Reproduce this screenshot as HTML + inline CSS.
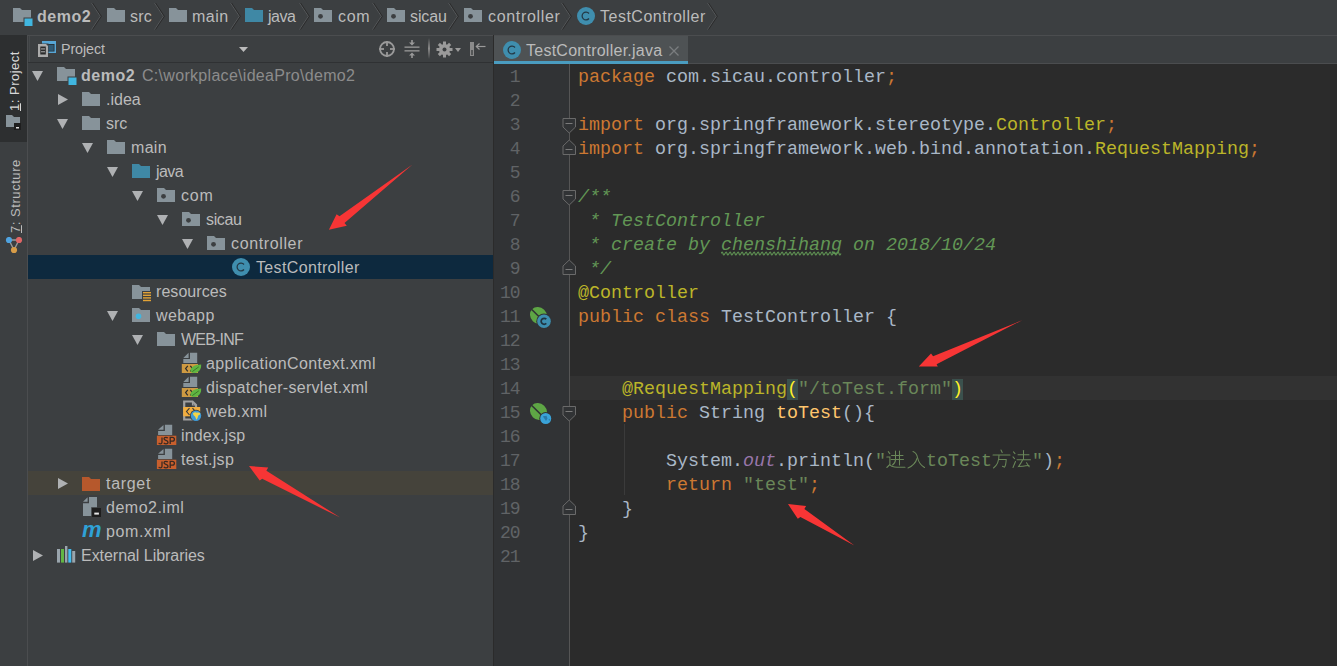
<!DOCTYPE html>
<html><head><meta charset="utf-8"><style>
html,body{margin:0;padding:0;}
body{width:1337px;height:666px;overflow:hidden;background:#3c3f41;position:relative;font-family:"Liberation Sans",sans-serif;}
.abs{position:absolute;}
.ui{font-family:"Liberation Sans",sans-serif;font-size:16px;line-height:24px;color:#bbbbbb;white-space:nowrap;letter-spacing:0.3px;}
.code{font-family:"Liberation Mono",monospace;font-size:18.33px;line-height:24px;white-space:pre;color:#a9b7c6;padding-top:2px;}
.gnum{font-family:"Liberation Mono",monospace;font-size:18px;line-height:24px;color:#606366;text-align:right;padding-top:1px;letter-spacing:-1px;}
.cjk{display:inline-block;width:20px;height:1px;position:relative;vertical-align:baseline;}
.cjk svg{position:absolute;left:0;top:-16px;}
</style></head>
<body>
<div class="abs" id="bc" style="left:0;top:0;width:1337px;height:35px;background:#3c3f41"></div><svg class="abs" style="left:13px;top:8px" width="20" height="18" viewBox="0 0 20 18"><path d="M0 0H7L9 2H18V14H0Z" fill="#87939a"/><rect x="10.5" y="9.5" width="8" height="8" fill="#3c3f41"/><rect x="11.5" y="10.5" width="8" height="8" fill="#40b6e0"/></svg><div class="abs ui" style="left:37px;top:5px;letter-spacing:0.5px;font-weight:bold;">demo2</div><svg class="abs" style="left:107px;top:8px" width="18" height="14" viewBox="0 0 18 14"><path d="M0 0H7L9 2H18V14H0Z" fill="#87939a"/></svg><div class="abs ui" style="left:130px;top:5px;letter-spacing:0.2px;">src</div><svg class="abs" style="left:169px;top:8px" width="18" height="14" viewBox="0 0 18 14"><path d="M0 0H7L9 2H18V14H0Z" fill="#87939a"/></svg><div class="abs ui" style="left:192px;top:5px;letter-spacing:0.5px;">main</div><svg class="abs" style="left:245px;top:8px" width="18" height="14" viewBox="0 0 18 14"><path d="M0 0H7L9 2H18V14H0Z" fill="#3f88a5"/></svg><div class="abs ui" style="left:268px;top:5px;letter-spacing:-0.5px;">java</div><svg class="abs" style="left:314px;top:8px" width="18" height="14" viewBox="0 0 18 14"><path d="M0 0H7L9 2H18V14H0Z" fill="#87939a"/><circle cx="6.5" cy="8.3" r="2.4" fill="#3c3f41"/></svg><div class="abs ui" style="left:338px;top:5px;letter-spacing:0.65px;">com</div><svg class="abs" style="left:387px;top:8px" width="18" height="14" viewBox="0 0 18 14"><path d="M0 0H7L9 2H18V14H0Z" fill="#87939a"/><circle cx="6.5" cy="8.3" r="2.4" fill="#3c3f41"/></svg><div class="abs ui" style="left:410px;top:5px;letter-spacing:-0.1px;">sicau</div><svg class="abs" style="left:464px;top:8px" width="18" height="14" viewBox="0 0 18 14"><path d="M0 0H7L9 2H18V14H0Z" fill="#87939a"/><circle cx="6.5" cy="8.3" r="2.4" fill="#3c3f41"/></svg><div class="abs ui" style="left:488px;top:5px;letter-spacing:0.67px;">controller</div><svg class="abs" style="left:577px;top:7px" width="18" height="18" viewBox="0 0 18 18"><circle cx="9" cy="9" r="9" fill="#3f8eae"/><path d="M12 6.5A3.9 3.9 0 1 0 12 11.5" fill="none" stroke="#233845" stroke-width="1.25"/></svg><div class="abs ui" style="left:600px;top:5px;letter-spacing:0.5px;">TestController</div><svg class="abs" style="left:90px;top:0px" width="14" height="34" viewBox="0 0 14 34"><path d="M1.6 3L10.4 16.3L1.6 29.5" fill="none" stroke="#55585a" stroke-width="1"/><path d="M2.6 3L11.4 16.3L2.6 29.5" fill="none" stroke="#2b2b2b" stroke-width="1"/></svg><svg class="abs" style="left:153px;top:0px" width="14" height="34" viewBox="0 0 14 34"><path d="M1.6 3L10.4 16.3L1.6 29.5" fill="none" stroke="#55585a" stroke-width="1"/><path d="M2.6 3L11.4 16.3L2.6 29.5" fill="none" stroke="#2b2b2b" stroke-width="1"/></svg><svg class="abs" style="left:229px;top:0px" width="14" height="34" viewBox="0 0 14 34"><path d="M1.6 3L10.4 16.3L1.6 29.5" fill="none" stroke="#55585a" stroke-width="1"/><path d="M2.6 3L11.4 16.3L2.6 29.5" fill="none" stroke="#2b2b2b" stroke-width="1"/></svg><svg class="abs" style="left:298px;top:0px" width="14" height="34" viewBox="0 0 14 34"><path d="M1.6 3L10.4 16.3L1.6 29.5" fill="none" stroke="#55585a" stroke-width="1"/><path d="M2.6 3L11.4 16.3L2.6 29.5" fill="none" stroke="#2b2b2b" stroke-width="1"/></svg><svg class="abs" style="left:371px;top:0px" width="14" height="34" viewBox="0 0 14 34"><path d="M1.6 3L10.4 16.3L1.6 29.5" fill="none" stroke="#55585a" stroke-width="1"/><path d="M2.6 3L11.4 16.3L2.6 29.5" fill="none" stroke="#2b2b2b" stroke-width="1"/></svg><svg class="abs" style="left:447px;top:0px" width="14" height="34" viewBox="0 0 14 34"><path d="M1.6 3L10.4 16.3L1.6 29.5" fill="none" stroke="#55585a" stroke-width="1"/><path d="M2.6 3L11.4 16.3L2.6 29.5" fill="none" stroke="#2b2b2b" stroke-width="1"/></svg><svg class="abs" style="left:560px;top:0px" width="14" height="34" viewBox="0 0 14 34"><path d="M1.6 3L10.4 16.3L1.6 29.5" fill="none" stroke="#55585a" stroke-width="1"/><path d="M2.6 3L11.4 16.3L2.6 29.5" fill="none" stroke="#2b2b2b" stroke-width="1"/></svg><svg class="abs" style="left:706px;top:0px" width="14" height="34" viewBox="0 0 14 34"><path d="M1.6 3L10.4 16.3L1.6 29.5" fill="none" stroke="#55585a" stroke-width="1"/><path d="M2.6 3L11.4 16.3L2.6 29.5" fill="none" stroke="#2b2b2b" stroke-width="1"/></svg><div class="abs" style="left:0;top:35px;width:27px;height:631px;background:#3c3f41"></div><div class="abs" style="left:0;top:35px;width:27px;height:107px;background:#2d2f30"></div><div class="abs" style="left:27px;top:35px;width:1px;height:631px;background:#4b4d4f"></div><div class="abs vt" style="left:2px;top:50px;width:24px;height:60px;"><span style="display:block;transform:rotate(-90deg);transform-origin:0 0;position:absolute;left:6px;top:61px;white-space:nowrap;font-size:13px;color:#d8d8d8;line-height:14px;letter-spacing:0.5px"><u>1</u>: Project</span></div><svg class="abs" style="left:6px;top:115px" width="16" height="16" viewBox="0 0 16 16"><path d="M0 0H6L8 2H14V12H0Z" fill="#87939a"/><rect x="8" y="8" width="7" height="7" fill="#1e1e1e"/><rect x="10" y="12" width="3" height="1.5" fill="#ddd"/></svg><div class="abs vt" style="left:2px;top:160px;width:24px;height:73px;"><span style="display:block;transform:rotate(-90deg);transform-origin:0 0;position:absolute;left:7px;top:73px;white-space:nowrap;font-size:13px;color:#bbbbbb;line-height:14px;letter-spacing:0.55px"><u>7</u>: Structure</span></div><svg class="abs" style="left:5px;top:237px" width="18" height="17" viewBox="0 0 18 17"><path d="M4 3H14L9 13Z" fill="none" stroke="#9a9a9a" stroke-width="1.4"/><circle cx="4" cy="3" r="3.1" fill="#4fa3e0"/><circle cx="14" cy="3" r="3.1" fill="#e06666"/><circle cx="9" cy="13" r="3.1" fill="#d79c48"/></svg><div class="abs" style="left:28px;top:35px;width:465px;height:631px;background:#3c3f41"></div><div class="abs" style="left:28px;top:35px;width:465px;height:1px;background:#4b4d4f"></div><div class="abs" style="left:28px;top:62px;width:465px;height:1px;background:#2f3133"></div><div class="abs" style="left:29px;top:36px;width:1px;height:26px;background:#45484a"></div><div class="abs" style="left:493px;top:35px;width:1px;height:631px;background:#2b2b2b"></div><svg class="abs" style="left:37px;top:40px" width="21" height="18" viewBox="0 0 21 18"><rect x="5" y="1" width="14" height="12" fill="#56a6d6"/><rect x="9.5" y="4" width="8" height="7.5" fill="#262b2e"/><rect x="10.3" y="4.8" width="6.4" height="6" fill="#2f5a75"/><rect x="0.5" y="3.5" width="11" height="14" fill="#3c3f41"/><path d="M1 4H9L11 6V17H1Z" fill="#ababab"/><rect x="3.3" y="6.5" width="5.5" height="8" fill="#2b2b2b"/><rect x="4" y="8.2" width="4" height="1.4" fill="#8a8a8a"/><rect x="4" y="11" width="4" height="1.4" fill="#8a8a8a"/></svg><div class="abs ui" style="left:61px;top:37px;font-size:14.3px;color:#bbbbbb;letter-spacing:-0.1px">Project</div><svg class="abs" style="left:238.5px;top:47px" width="9" height="5" viewBox="0 0 9 5"><path d="M0 0H9L4.5 5Z" fill="#bbbbbb"/></svg><svg class="abs" style="left:378px;top:40px" width="18" height="18" viewBox="0 0 18 18"><circle cx="9" cy="9" r="7" fill="none" stroke="#9a9a9a" stroke-width="1.8"/><rect x="8.1" y="1" width="1.8" height="5" fill="#9a9a9a"/><rect x="8.1" y="12" width="1.8" height="5" fill="#9a9a9a"/><rect x="1" y="8.1" width="5" height="1.8" fill="#9a9a9a"/><rect x="12" y="8.1" width="5" height="1.8" fill="#9a9a9a"/></svg><svg class="abs" style="left:404px;top:40px" width="16" height="18" viewBox="0 0 16 18"><rect x="0.5" y="6.5" width="15" height="1.3" fill="#9a9a9a"/><rect x="0.5" y="10.2" width="15" height="1.3" fill="#9a9a9a"/><path d="M8 5.5L5 2.5H7.2V0H8.8V2.5H11Z" fill="#9a9a9a"/><path d="M8 12.5L5 15.5H7.2V18H8.8V15.5H11Z" fill="#9a9a9a"/></svg><div class="abs" style="left:428px;top:38px;width:2px;height:21px;background:linear-gradient(#3c3f41,#8a8a8a,#3c3f41)"></div><svg class="abs" style="left:436px;top:41px" width="17" height="17" viewBox="0 0 17 17"><g fill="#9a9a9a"><circle cx="8.5" cy="8.5" r="5.5"/><rect x="7" y="0.5" width="3" height="16"/><rect x="0.5" y="7" width="16" height="3"/><rect x="7" y="0.5" width="3" height="16" transform="rotate(45 8.5 8.5)"/><rect x="7" y="0.5" width="3" height="16" transform="rotate(-45 8.5 8.5)"/></g><circle cx="8.5" cy="8.5" r="2" fill="#3c3f41"/></svg><svg class="abs" style="left:455px;top:48px" width="6" height="4" viewBox="0 0 6 4"><path d="M0 0H6L3 4Z" fill="#9a9a9a"/></svg><svg class="abs" style="left:470px;top:42px" width="17" height="14" viewBox="0 0 17 14"><rect x="0" y="0" width="4" height="14" fill="#8a8a8a"/><rect x="1.3" y="8" width="1.4" height="5" fill="#3c3f41"/><path d="M15.5 4.5H7" stroke="#9a9a9a" stroke-width="1.2"/><path d="M9.5 1.5L6.3 4.5L9.5 7.5" fill="none" stroke="#9a9a9a" stroke-width="1.2"/></svg><div class="abs" style="left:28px;top:255px;width:465px;height:24px;background:#0d293e"></div><div class="abs" style="left:28px;top:471px;width:465px;height:24px;background:#45433b"></div><svg class="abs" style="left:32px;top:71px" width="11" height="10" viewBox="0 0 11 10"><path d="M0 0H11L5.5 10Z" fill="#afb1b3"/></svg><svg class="abs" style="left:57px;top:67px" width="20" height="18" viewBox="0 0 20 18"><path d="M0 0H7L9 2H18V14H0Z" fill="#87939a"/><rect x="10.5" y="9.5" width="8" height="8" fill="#3c3f41"/><rect x="11.5" y="10.5" width="8" height="8" fill="#40b6e0"/></svg><div class="abs ui" style="left:81px;top:64px;letter-spacing:0.5px;font-weight:bold;">demo2</div><div class="abs ui" style="left:142px;top:64px;color:#8c8c8c">C:\workplace\ideaPro\demo2</div><svg class="abs" style="left:58px;top:94px" width="10" height="11" viewBox="0 0 10 11"><path d="M0 0V11L10 5.5Z" fill="#afb1b3"/></svg><svg class="abs" style="left:82px;top:92px" width="18" height="14" viewBox="0 0 18 14"><path d="M0 0H7L9 2H18V14H0Z" fill="#87939a"/></svg><div class="abs ui" style="left:106px;top:88px;letter-spacing:0px;">.idea</div><svg class="abs" style="left:57px;top:119px" width="11" height="10" viewBox="0 0 11 10"><path d="M0 0H11L5.5 10Z" fill="#afb1b3"/></svg><svg class="abs" style="left:82px;top:116px" width="18" height="14" viewBox="0 0 18 14"><path d="M0 0H7L9 2H18V14H0Z" fill="#87939a"/></svg><div class="abs ui" style="left:106px;top:112px;letter-spacing:0px;">src</div><svg class="abs" style="left:82px;top:143px" width="11" height="10" viewBox="0 0 11 10"><path d="M0 0H11L5.5 10Z" fill="#afb1b3"/></svg><svg class="abs" style="left:107px;top:140px" width="18" height="14" viewBox="0 0 18 14"><path d="M0 0H7L9 2H18V14H0Z" fill="#87939a"/></svg><div class="abs ui" style="left:131px;top:136px;letter-spacing:0.3px;">main</div><svg class="abs" style="left:107px;top:167px" width="11" height="10" viewBox="0 0 11 10"><path d="M0 0H11L5.5 10Z" fill="#afb1b3"/></svg><svg class="abs" style="left:132px;top:164px" width="18" height="14" viewBox="0 0 18 14"><path d="M0 0H7L9 2H18V14H0Z" fill="#3f88a5"/></svg><div class="abs ui" style="left:156px;top:160px;letter-spacing:-0.6px;">java</div><svg class="abs" style="left:132px;top:191px" width="11" height="10" viewBox="0 0 11 10"><path d="M0 0H11L5.5 10Z" fill="#afb1b3"/></svg><svg class="abs" style="left:157px;top:188px" width="18" height="14" viewBox="0 0 18 14"><path d="M0 0H7L9 2H18V14H0Z" fill="#87939a"/><circle cx="6.5" cy="8.3" r="2.4" fill="#3c3f41"/></svg><div class="abs ui" style="left:181px;top:184px;letter-spacing:0.8px;">com</div><svg class="abs" style="left:157px;top:215px" width="11" height="10" viewBox="0 0 11 10"><path d="M0 0H11L5.5 10Z" fill="#afb1b3"/></svg><svg class="abs" style="left:182px;top:212px" width="18" height="14" viewBox="0 0 18 14"><path d="M0 0H7L9 2H18V14H0Z" fill="#87939a"/><circle cx="6.5" cy="8.3" r="2.4" fill="#3c3f41"/></svg><div class="abs ui" style="left:206px;top:208px;letter-spacing:-0.35px;">sicau</div><svg class="abs" style="left:182px;top:239px" width="11" height="10" viewBox="0 0 11 10"><path d="M0 0H11L5.5 10Z" fill="#afb1b3"/></svg><svg class="abs" style="left:207px;top:236px" width="18" height="14" viewBox="0 0 18 14"><path d="M0 0H7L9 2H18V14H0Z" fill="#87939a"/><circle cx="6.5" cy="8.3" r="2.4" fill="#3c3f41"/></svg><div class="abs ui" style="left:231px;top:232px;letter-spacing:0.63px;">controller</div><svg class="abs" style="left:232px;top:258px" width="18" height="18" viewBox="0 0 18 18"><circle cx="9" cy="9" r="9" fill="#3f8eae"/><path d="M12 6.5A3.9 3.9 0 1 0 12 11.5" fill="none" stroke="#233845" stroke-width="1.25"/></svg><div class="abs ui" style="left:256px;top:256px;letter-spacing:0.35px;">TestController</div><svg class="abs" style="left:132px;top:285px" width="18" height="14" viewBox="0 0 18 14"><path d="M0 0H7L9 2H18V14H0Z" fill="#87939a"/></svg><svg class="abs" style="left:142px;top:291px" width="10" height="11" viewBox="0 0 10 11"><rect x="0" y="0" width="10" height="11" fill="#3c3f41"/><g fill="#e3a336"><rect x="1" y="1" width="8" height="1.4"/><rect x="1" y="3.6" width="8" height="1.4"/><rect x="1" y="6.2" width="8" height="1.4"/><rect x="1" y="8.8" width="8" height="1.4"/></g></svg><div class="abs ui" style="left:156px;top:280px;letter-spacing:0.05px;">resources</div><svg class="abs" style="left:107px;top:311px" width="11" height="10" viewBox="0 0 11 10"><path d="M0 0H11L5.5 10Z" fill="#afb1b3"/></svg><svg class="abs" style="left:132px;top:308px" width="18" height="14" viewBox="0 0 18 14"><path d="M0 0H7L9 2H18V14H0Z" fill="#87939a"/><circle cx="6.5" cy="8.3" r="2.8" fill="#40b6e0"/></svg><div class="abs ui" style="left:156px;top:304px;letter-spacing:0.46px;">webapp</div><svg class="abs" style="left:132px;top:335px" width="11" height="10" viewBox="0 0 11 10"><path d="M0 0H11L5.5 10Z" fill="#afb1b3"/></svg><svg class="abs" style="left:157px;top:332px" width="18" height="14" viewBox="0 0 18 14"><path d="M0 0H7L9 2H18V14H0Z" fill="#87939a"/></svg><div class="abs ui" style="left:181px;top:328px;letter-spacing:-0.8px;">WEB-INF</div><svg class="abs" style="left:181px;top:352px" width="21" height="22" viewBox="0 0 21 22"><path d="M9 0.7H16.2V10.9H2.3V7.1H9Z" fill="#87939a"/><path d="M2.3 5.9L7.6 0.8V5.9Z" fill="#87939a"/><rect x="0.8" y="12" width="16.2" height="9" fill="#ce9a42"/><path d="M6.8 13.8L4.6 16.6L6.8 19.4" fill="none" stroke="#2b2b2b" stroke-width="1.2"/><path d="M9.3 13.8L11.5 16.6L9.3 19.4" fill="none" stroke="#2b2b2b" stroke-width="1.2"/><path d="M20.1 12.4C14 12.6 9.3 15 9.4 18.6C9.5 20.6 11.5 21.2 13.5 21C18 20.4 20.6 17 20.1 12.4Z" fill="#5fb641"/><path d="M11.3 19.6L17.8 14.8" stroke="#3a7028" stroke-width="0.9"/></svg><div class="abs ui" style="left:206px;top:352px;letter-spacing:0.41px;">applicationContext.xml</div><svg class="abs" style="left:181px;top:376px" width="21" height="22" viewBox="0 0 21 22"><path d="M9 0.7H16.2V10.9H2.3V7.1H9Z" fill="#87939a"/><path d="M2.3 5.9L7.6 0.8V5.9Z" fill="#87939a"/><rect x="0.8" y="12" width="16.2" height="9" fill="#ce9a42"/><path d="M6.8 13.8L4.6 16.6L6.8 19.4" fill="none" stroke="#2b2b2b" stroke-width="1.2"/><path d="M9.3 13.8L11.5 16.6L9.3 19.4" fill="none" stroke="#2b2b2b" stroke-width="1.2"/><path d="M20.1 12.4C14 12.6 9.3 15 9.4 18.6C9.5 20.6 11.5 21.2 13.5 21C18 20.4 20.6 17 20.1 12.4Z" fill="#5fb641"/><path d="M11.3 19.6L17.8 14.8" stroke="#3a7028" stroke-width="0.9"/></svg><div class="abs ui" style="left:206px;top:376px;letter-spacing:0.3px;">dispatcher-servlet.xml</div><svg class="abs" style="left:182px;top:400px" width="24" height="23" viewBox="0 0 24 23"><path d="M2.2 1.5H10.5L14 5V19.5H2.2Z" fill="none" stroke="#a0a0a0" stroke-width="2.2"/><path d="M10.5 1.5V5H14" fill="none" stroke="#a0a0a0" stroke-width="1.2"/><rect x="1.2" y="7" width="17" height="9.3" fill="#f2ad3e"/><path d="M7.5 8.2L4.5 11.6L7.5 15" fill="none" stroke="#3a3a3a" stroke-width="1.1"/><path d="M10.5 8.2L13.5 11.6" fill="none" stroke="#3a3a3a" stroke-width="1.1"/><circle cx="14" cy="15.8" r="6" fill="#3c3f41"/><circle cx="14" cy="15.8" r="5.2" fill="#3f9bd8"/><path d="M11 13.3C12.2 12 14 12.3 15 12.8C16 12.2 17.5 12.5 18.3 13.5C18 14.8 17 15.2 16.2 15.6C16 17 15.5 18.5 14.6 19.8C13.8 18.6 13.6 17 12.8 16.2C11.8 15.6 11 14.6 11 13.3Z" fill="#f3d54a"/></svg><div class="abs ui" style="left:206px;top:400px;letter-spacing:0.4px;">web.xml</div><svg class="abs" style="left:156px;top:424px" width="21" height="23" viewBox="0 0 21 23"><path d="M8.9 0.7H16.2V10.9H2.1V7H8.9Z" fill="#87939a"/><path d="M2.1 5.8L7.5 0.9V5.8Z" fill="#87939a"/><rect x="0.9" y="11.7" width="19.4" height="9.3" fill="#c85f2d"/><path d="M6 13.4V18.3C6 19.5 5.3 19.9 4.3 19.9C3.5 19.9 3 19.5 2.8 18.9" fill="none" stroke="#3a2a22" stroke-width="1.3"/><path d="M11.8 14.2C11.3 13.5 10.6 13.3 9.8 13.3C8.8 13.3 8 13.9 8 14.8C8 16.9 12 16 12 18.3C12 19.3 11.1 19.9 10 19.9C9.1 19.9 8.3 19.5 7.8 18.8" fill="none" stroke="#3a2a22" stroke-width="1.3"/><path d="M14.2 19.9V13.4H16.3C17.6 13.4 18.4 14.1 18.4 15.3C18.4 16.5 17.6 17.2 16.3 17.2H14.2" fill="none" stroke="#3a2a22" stroke-width="1.3"/></svg><div class="abs ui" style="left:181px;top:424px;letter-spacing:0.14px;">index.jsp</div><svg class="abs" style="left:156px;top:448px" width="21" height="23" viewBox="0 0 21 23"><path d="M8.9 0.7H16.2V10.9H2.1V7H8.9Z" fill="#87939a"/><path d="M2.1 5.8L7.5 0.9V5.8Z" fill="#87939a"/><rect x="0.9" y="11.7" width="19.4" height="9.3" fill="#c85f2d"/><path d="M6 13.4V18.3C6 19.5 5.3 19.9 4.3 19.9C3.5 19.9 3 19.5 2.8 18.9" fill="none" stroke="#3a2a22" stroke-width="1.3"/><path d="M11.8 14.2C11.3 13.5 10.6 13.3 9.8 13.3C8.8 13.3 8 13.9 8 14.8C8 16.9 12 16 12 18.3C12 19.3 11.1 19.9 10 19.9C9.1 19.9 8.3 19.5 7.8 18.8" fill="none" stroke="#3a2a22" stroke-width="1.3"/><path d="M14.2 19.9V13.4H16.3C17.6 13.4 18.4 14.1 18.4 15.3C18.4 16.5 17.6 17.2 16.3 17.2H14.2" fill="none" stroke="#3a2a22" stroke-width="1.3"/></svg><div class="abs ui" style="left:181px;top:448px;letter-spacing:0.3px;">test.jsp</div><svg class="abs" style="left:58px;top:478px" width="10" height="11" viewBox="0 0 10 11"><path d="M0 0V11L10 5.5Z" fill="#afb1b3"/></svg><svg class="abs" style="left:82px;top:477px" width="18" height="14" viewBox="0 0 18 14"><path d="M0 0H7L9 2H18V14H0Z" fill="#b6582c"/></svg><div class="abs ui" style="left:106px;top:472px;letter-spacing:0.7px;">target</div><svg class="abs" style="left:83px;top:497px" width="19" height="21" viewBox="0 0 19 21"><path d="M6 0H14V19H0V6.2H6Z" fill="#87939a"/><path d="M0 4.8L4.6 0.3V4.8Z" fill="#87939a"/><rect x="8.2" y="10.2" width="10.5" height="10.5" fill="#3c3f41"/><rect x="9" y="11" width="9" height="9" fill="#1e1e1e"/><rect x="11.3" y="15.6" width="4.6" height="2" fill="#e8e8e8"/></svg><div class="abs ui" style="left:106px;top:496px;letter-spacing:0.5px;">demo2.iml</div><div class="abs" style="left:82px;top:518px;font-family:'Liberation Sans',sans-serif;font-style:italic;font-weight:bold;font-size:22px;color:#2fa1d6;line-height:24px">m</div><div class="abs ui" style="left:106px;top:520px;letter-spacing:0.63px;">pom.xml</div><svg class="abs" style="left:33px;top:550px" width="10" height="11" viewBox="0 0 10 11"><path d="M0 0V11L10 5.5Z" fill="#afb1b3"/></svg><svg class="abs" style="left:57px;top:546px" width="19" height="17" viewBox="0 0 19 17"><rect x="0" y="3" width="3" height="13.6" fill="#9aa5ad"/><rect x="4" y="3" width="3" height="13.6" fill="#62b543"/><rect x="8" y="0" width="2.4" height="16.6" fill="#9aa5ad"/><rect x="11.3" y="3" width="3" height="13.6" fill="#44bdf0"/><rect x="15.2" y="5" width="3" height="11.6" fill="#9aa5ad"/></svg><div class="abs ui" style="left:81px;top:544px;letter-spacing:-0.04px;">External Libraries</div><div class="abs" style="left:494px;top:35px;width:843px;height:29px;background:#3c3f41"></div><div class="abs" style="left:494px;top:35px;width:843px;height:1px;background:#4b4d4f"></div><div class="abs" style="left:494px;top:36px;width:194px;height:25px;background:#4e5254"></div><div class="abs" style="left:494px;top:61px;width:194px;height:3px;background:#4a9cc0"></div><div class="abs" style="left:688px;top:63px;width:649px;height:1px;background:#4b4d4f"></div><svg class="abs" style="left:503px;top:41px" width="18" height="18" viewBox="0 0 18 18"><circle cx="9" cy="9" r="9" fill="#3f8eae"/><path d="M12 6.5A3.9 3.9 0 1 0 12 11.5" fill="none" stroke="#233845" stroke-width="1.25"/></svg><div class="abs ui" style="left:526px;top:39px;letter-spacing:0.25px">TestController.java</div><svg class="abs" style="left:669px;top:46px" width="10" height="10" viewBox="0 0 10 10"><path d="M0.5 0.5L9.5 9.5M9.5 0.5L0.5 9.5" stroke="#7a7d7f" stroke-width="1.3"/></svg><div class="abs" style="left:494px;top:64px;width:843px;height:602px;background:#2b2b2b"></div><div class="abs" style="left:494px;top:64px;width:75px;height:602px;background:#313335"></div><div class="abs" style="left:569px;top:64px;width:1px;height:602px;background:#555555"></div><div class="abs" style="left:570px;top:376px;width:767px;height:24px;background:#323232"></div><div class="abs code" style="left:578px;top:64px"><span style="color:#cc7832;">package</span> <span style="color:#a9b7c6;">com.sicau.controller</span><span style="color:#cc7832;">;</span></div><div class="abs gnum" style="left:494px;top:64px;width:25.5px">1</div><div class="abs code" style="left:578px;top:88px"></div><div class="abs gnum" style="left:494px;top:88px;width:25.5px">2</div><div class="abs code" style="left:578px;top:112px"><span style="color:#cc7832;">import</span> <span style="color:#a9b7c6;">org.springframework.stereotype.</span><span style="color:#bbb529;">Controller</span><span style="color:#cc7832;">;</span></div><div class="abs gnum" style="left:494px;top:112px;width:25.5px">3</div><div class="abs code" style="left:578px;top:136px"><span style="color:#cc7832;">import</span> <span style="color:#a9b7c6;">org.springframework.web.bind.annotation.</span><span style="color:#bbb529;">RequestMapping</span><span style="color:#cc7832;">;</span></div><div class="abs gnum" style="left:494px;top:136px;width:25.5px">4</div><div class="abs code" style="left:578px;top:160px"></div><div class="abs gnum" style="left:494px;top:160px;width:25.5px">5</div><div class="abs code" style="left:578px;top:184px"><span style="color:#629755;font-style:italic">/**</span></div><div class="abs gnum" style="left:494px;top:184px;width:25.5px">6</div><div class="abs code" style="left:578px;top:208px"><span style="color:#629755;font-style:italic"> * TestController</span></div><div class="abs gnum" style="left:494px;top:208px;width:25.5px">7</div><div class="abs code" style="left:578px;top:232px"><span style="color:#629755;font-style:italic"> * create by </span><span style="color:#629755;font-style:italic">chenshihang</span><span style="color:#629755;font-style:italic"> on 2018/10/24</span></div><div class="abs gnum" style="left:494px;top:232px;width:25.5px">8</div><div class="abs code" style="left:578px;top:256px"><span style="color:#629755;font-style:italic"> */</span></div><div class="abs gnum" style="left:494px;top:256px;width:25.5px">9</div><div class="abs code" style="left:578px;top:280px"><span style="color:#bbb529;">@Controller</span></div><div class="abs gnum" style="left:494px;top:280px;width:25.5px">10</div><div class="abs code" style="left:578px;top:304px"><span style="color:#cc7832;">public class </span><span style="color:#a9b7c6;">TestController {</span></div><div class="abs gnum" style="left:494px;top:304px;width:25.5px">11</div><div class="abs code" style="left:578px;top:328px"></div><div class="abs gnum" style="left:494px;top:328px;width:25.5px">12</div><div class="abs code" style="left:578px;top:352px"></div><div class="abs gnum" style="left:494px;top:352px;width:25.5px">13</div><div class="abs code" style="left:578px;top:376px">    <span style="color:#bbb529;">@RequestMapping</span><span style="color:#ffef28;background:#3b514d">(</span><span style="color:#6a8759;">&quot;/toTest.form&quot;</span><span style="color:#ffef28;background:#3b514d">)</span></div><div class="abs gnum" style="left:494px;top:376px;width:25.5px">14</div><div class="abs code" style="left:578px;top:400px">    <span style="color:#cc7832;">public </span><span style="color:#a9b7c6;">String </span><span style="color:#ffc66d;">toTest</span><span style="color:#a9b7c6;">(){</span></div><div class="abs gnum" style="left:494px;top:400px;width:25.5px">15</div><div class="abs code" style="left:578px;top:424px"></div><div class="abs gnum" style="left:494px;top:424px;width:25.5px">16</div><div class="abs code" style="left:578px;top:448px">        <span style="color:#a9b7c6;">System.</span><span style="color:#9876aa;font-style:italic">out</span><span style="color:#a9b7c6;">.println(</span><span style="color:#6a8759;">&quot;</span><span class="cjk"><svg width="40" height="20" viewBox="0 0 40 20" fill="none" stroke="#6a8759" stroke-width="1.05" stroke-linecap="round"><path d="M2.3 2.6L3.8 4.6"/><path d="M0.8 8H3.9V15.5L0.8 18.5"/><path d="M3.8 15.8C6 18.2 9 18.4 19 18.2"/><path d="M5.5 6.5H17"/><path d="M5 10.5H17.5"/><path d="M9.5 2V10.5C9.5 13 8.5 14.5 6.5 16"/><path d="M13.5 2V16"/><path d="M27 2.5C29.5 3.5 31 5.5 31.5 8.5C32.5 13 35 16.5 38.5 18.5"/><path d="M31.2 9C30 13 28 16.5 22 19"/></svg></span><span class="cjk"></span><span style="color:#6a8759;">toTest</span><span class="cjk"><svg width="40" height="20" viewBox="0 0 40 20" fill="none" stroke="#6a8759" stroke-width="1.05" stroke-linecap="round"><path d="M9 1L10.2 3.5"/><path d="M1 6H18"/><path d="M7 6.2C7 12 5.5 16 1.5 19"/><path d="M6.5 10.5H14.2C14 14.5 13.5 17 12.5 18.2L10.5 17.2"/><path d="M21.5 2.8L23 4.6"/><path d="M21 7.8L22.5 9.6"/><path d="M21 18.5L23.5 12.5"/><path d="M26 5.8H37"/><path d="M31.5 1.5V10.5"/><path d="M25 10.8H38.5"/><path d="M30.5 11C29.5 13.5 28 15.5 26.5 17.6C30 17.4 33.5 17 37 16.6"/><path d="M34.5 13.8L37.2 17.8"/></svg></span><span class="cjk"></span><span style="color:#6a8759;">&quot;</span><span style="color:#a9b7c6;">)</span><span style="color:#cc7832;">;</span></div><div class="abs gnum" style="left:494px;top:448px;width:25.5px">17</div><div class="abs code" style="left:578px;top:472px">        <span style="color:#cc7832;">return </span><span style="color:#6a8759;">&quot;test&quot;</span><span style="color:#cc7832;">;</span></div><div class="abs gnum" style="left:494px;top:472px;width:25.5px">18</div><div class="abs code" style="left:578px;top:496px">    <span style="color:#a9b7c6;">}</span></div><div class="abs gnum" style="left:494px;top:496px;width:25.5px">19</div><div class="abs code" style="left:578px;top:520px"><span style="color:#a9b7c6;">}</span></div><div class="abs gnum" style="left:494px;top:520px;width:25.5px">20</div><div class="abs code" style="left:578px;top:544px"></div><div class="abs gnum" style="left:494px;top:544px;width:25.5px">21</div><svg class="abs" style="left:562px;top:118px" width="15" height="16" viewBox="0 0 15 16"><path d="M1 0.5H13.5V9L7.25 15L1 9Z" fill="#313335" stroke="#6a6a6a" stroke-width="1"/><path d="M3.5 5.5H10.5" stroke="#7a7a7a" stroke-width="1"/></svg><svg class="abs" style="left:562px;top:139px" width="15" height="16" viewBox="0 0 15 16"><path d="M1 15.5H13.5V7L7.25 1L1 7Z" fill="#313335" stroke="#6a6a6a" stroke-width="1"/><path d="M3.5 10.5H10.5" stroke="#7a7a7a" stroke-width="1"/></svg><svg class="abs" style="left:562px;top:190px" width="15" height="16" viewBox="0 0 15 16"><path d="M1 0.5H13.5V9L7.25 15L1 9Z" fill="#313335" stroke="#6a6a6a" stroke-width="1"/><path d="M3.5 5.5H10.5" stroke="#7a7a7a" stroke-width="1"/></svg><svg class="abs" style="left:562px;top:259px" width="15" height="16" viewBox="0 0 15 16"><path d="M1 15.5H13.5V7L7.25 1L1 7Z" fill="#313335" stroke="#6a6a6a" stroke-width="1"/><path d="M3.5 10.5H10.5" stroke="#7a7a7a" stroke-width="1"/></svg><svg class="abs" style="left:562px;top:406px" width="15" height="16" viewBox="0 0 15 16"><path d="M1 0.5H13.5V9L7.25 15L1 9Z" fill="#313335" stroke="#6a6a6a" stroke-width="1"/><path d="M3.5 5.5H10.5" stroke="#7a7a7a" stroke-width="1"/></svg><svg class="abs" style="left:562px;top:499px" width="15" height="16" viewBox="0 0 15 16"><path d="M1 15.5H13.5V7L7.25 1L1 7Z" fill="#313335" stroke="#6a6a6a" stroke-width="1"/><path d="M3.5 10.5H10.5" stroke="#7a7a7a" stroke-width="1"/></svg><div class="abs" style="left:624px;top:424px;width:1px;height:71px;background:#3b3b3b"></div><svg class="abs" style="left:529px;top:306px" width="24" height="24" viewBox="0 0 24 24"><ellipse cx="9.5" cy="9.5" rx="9" ry="8" transform="rotate(45 9.5 9.5)" fill="#5ea645"/><path d="M2.5 3.2L17 17.5" stroke="#313335" stroke-width="1.6"/><circle cx="15" cy="15.3" r="7.7" fill="#313335"/><circle cx="15" cy="15.3" r="6.8" fill="#3d8fb0"/><path d="M17.3 13.2A3 3 0 1 0 17.3 17.4" fill="none" stroke="#1f3440" stroke-width="1.7"/></svg><svg class="abs" style="left:529px;top:402px" width="24" height="24" viewBox="0 0 24 24"><ellipse cx="9.5" cy="9.5" rx="9" ry="8" transform="rotate(45 9.5 9.5)" fill="#5ea645"/><path d="M2.5 3.2L17 17.5" stroke="#313335" stroke-width="1.6"/><circle cx="16.7" cy="16.5" r="6.4" fill="#313335"/><circle cx="16.7" cy="16.5" r="5.5" fill="#3aa3d8"/><path d="M14 14.5C15 13.5 16.5 14.2 17.5 13.8L18.5 16.5L17 19Z" fill="#2a79a8"/><path d="M19.5 17.5L21 16.8L20.5 19Z" fill="#2a79a8"/></svg><svg class="abs" style="left:721px;top:251px" width="122" height="5" viewBox="0 0 122 5"><path d="M0 2.5 C1 0.5 1.5 0.5 2 2.5 C2.5 4.5 3 4.5 4 2.5 C5 0.5 5.5 0.5 6 2.5 C6.5 4.5 7 4.5 8 2.5 C9 0.5 9.5 0.5 10 2.5 C10.5 4.5 11 4.5 12 2.5 C13 0.5 13.5 0.5 14 2.5 C14.5 4.5 15 4.5 16 2.5 C17 0.5 17.5 0.5 18 2.5 C18.5 4.5 19 4.5 20 2.5 C21 0.5 21.5 0.5 22 2.5 C22.5 4.5 23 4.5 24 2.5 C25 0.5 25.5 0.5 26 2.5 C26.5 4.5 27 4.5 28 2.5 C29 0.5 29.5 0.5 30 2.5 C30.5 4.5 31 4.5 32 2.5 C33 0.5 33.5 0.5 34 2.5 C34.5 4.5 35 4.5 36 2.5 C37 0.5 37.5 0.5 38 2.5 C38.5 4.5 39 4.5 40 2.5 C41 0.5 41.5 0.5 42 2.5 C42.5 4.5 43 4.5 44 2.5 C45 0.5 45.5 0.5 46 2.5 C46.5 4.5 47 4.5 48 2.5 C49 0.5 49.5 0.5 50 2.5 C50.5 4.5 51 4.5 52 2.5 C53 0.5 53.5 0.5 54 2.5 C54.5 4.5 55 4.5 56 2.5 C57 0.5 57.5 0.5 58 2.5 C58.5 4.5 59 4.5 60 2.5 C61 0.5 61.5 0.5 62 2.5 C62.5 4.5 63 4.5 64 2.5 C65 0.5 65.5 0.5 66 2.5 C66.5 4.5 67 4.5 68 2.5 C69 0.5 69.5 0.5 70 2.5 C70.5 4.5 71 4.5 72 2.5 C73 0.5 73.5 0.5 74 2.5 C74.5 4.5 75 4.5 76 2.5 C77 0.5 77.5 0.5 78 2.5 C78.5 4.5 79 4.5 80 2.5 C81 0.5 81.5 0.5 82 2.5 C82.5 4.5 83 4.5 84 2.5 C85 0.5 85.5 0.5 86 2.5 C86.5 4.5 87 4.5 88 2.5 C89 0.5 89.5 0.5 90 2.5 C90.5 4.5 91 4.5 92 2.5 C93 0.5 93.5 0.5 94 2.5 C94.5 4.5 95 4.5 96 2.5 C97 0.5 97.5 0.5 98 2.5 C98.5 4.5 99 4.5 100 2.5 C101 0.5 101.5 0.5 102 2.5 C102.5 4.5 103 4.5 104 2.5 C105 0.5 105.5 0.5 106 2.5 C106.5 4.5 107 4.5 108 2.5 C109 0.5 109.5 0.5 110 2.5 C110.5 4.5 111 4.5 112 2.5 C113 0.5 113.5 0.5 114 2.5 C114.5 4.5 115 4.5 116 2.5 C117 0.5 117.5 0.5 118 2.5 C118.5 4.5 119 4.5 120 2.5" fill="none" stroke="#629755" stroke-width="1.1"/></svg><svg class="abs" style="left:0;top:0" width="1337" height="666" viewBox="0 0 1337 666">
<g fill="#f73535">
<polygon points="412.5,164.6 344.5,223.0 346.8,225.8 328.9,229.7 336.6,214.3 339.5,216.2"/>
<polygon points="340.2,517.6 262.2,478.8 259.7,480.4 249.0,466.1 268.2,467.5 266.4,470.8"/>
<polygon points="1022.2,320.2 936.6,364.3 937.8,366.6 918.8,366.6 931.0,353.4 933.1,356.2"/>
<polygon points="854.4,545.6 800.4,516.9 797.8,518.8 788.0,504.1 806.1,506.1 804.4,508.9"/>
</g></svg>
</body></html>
